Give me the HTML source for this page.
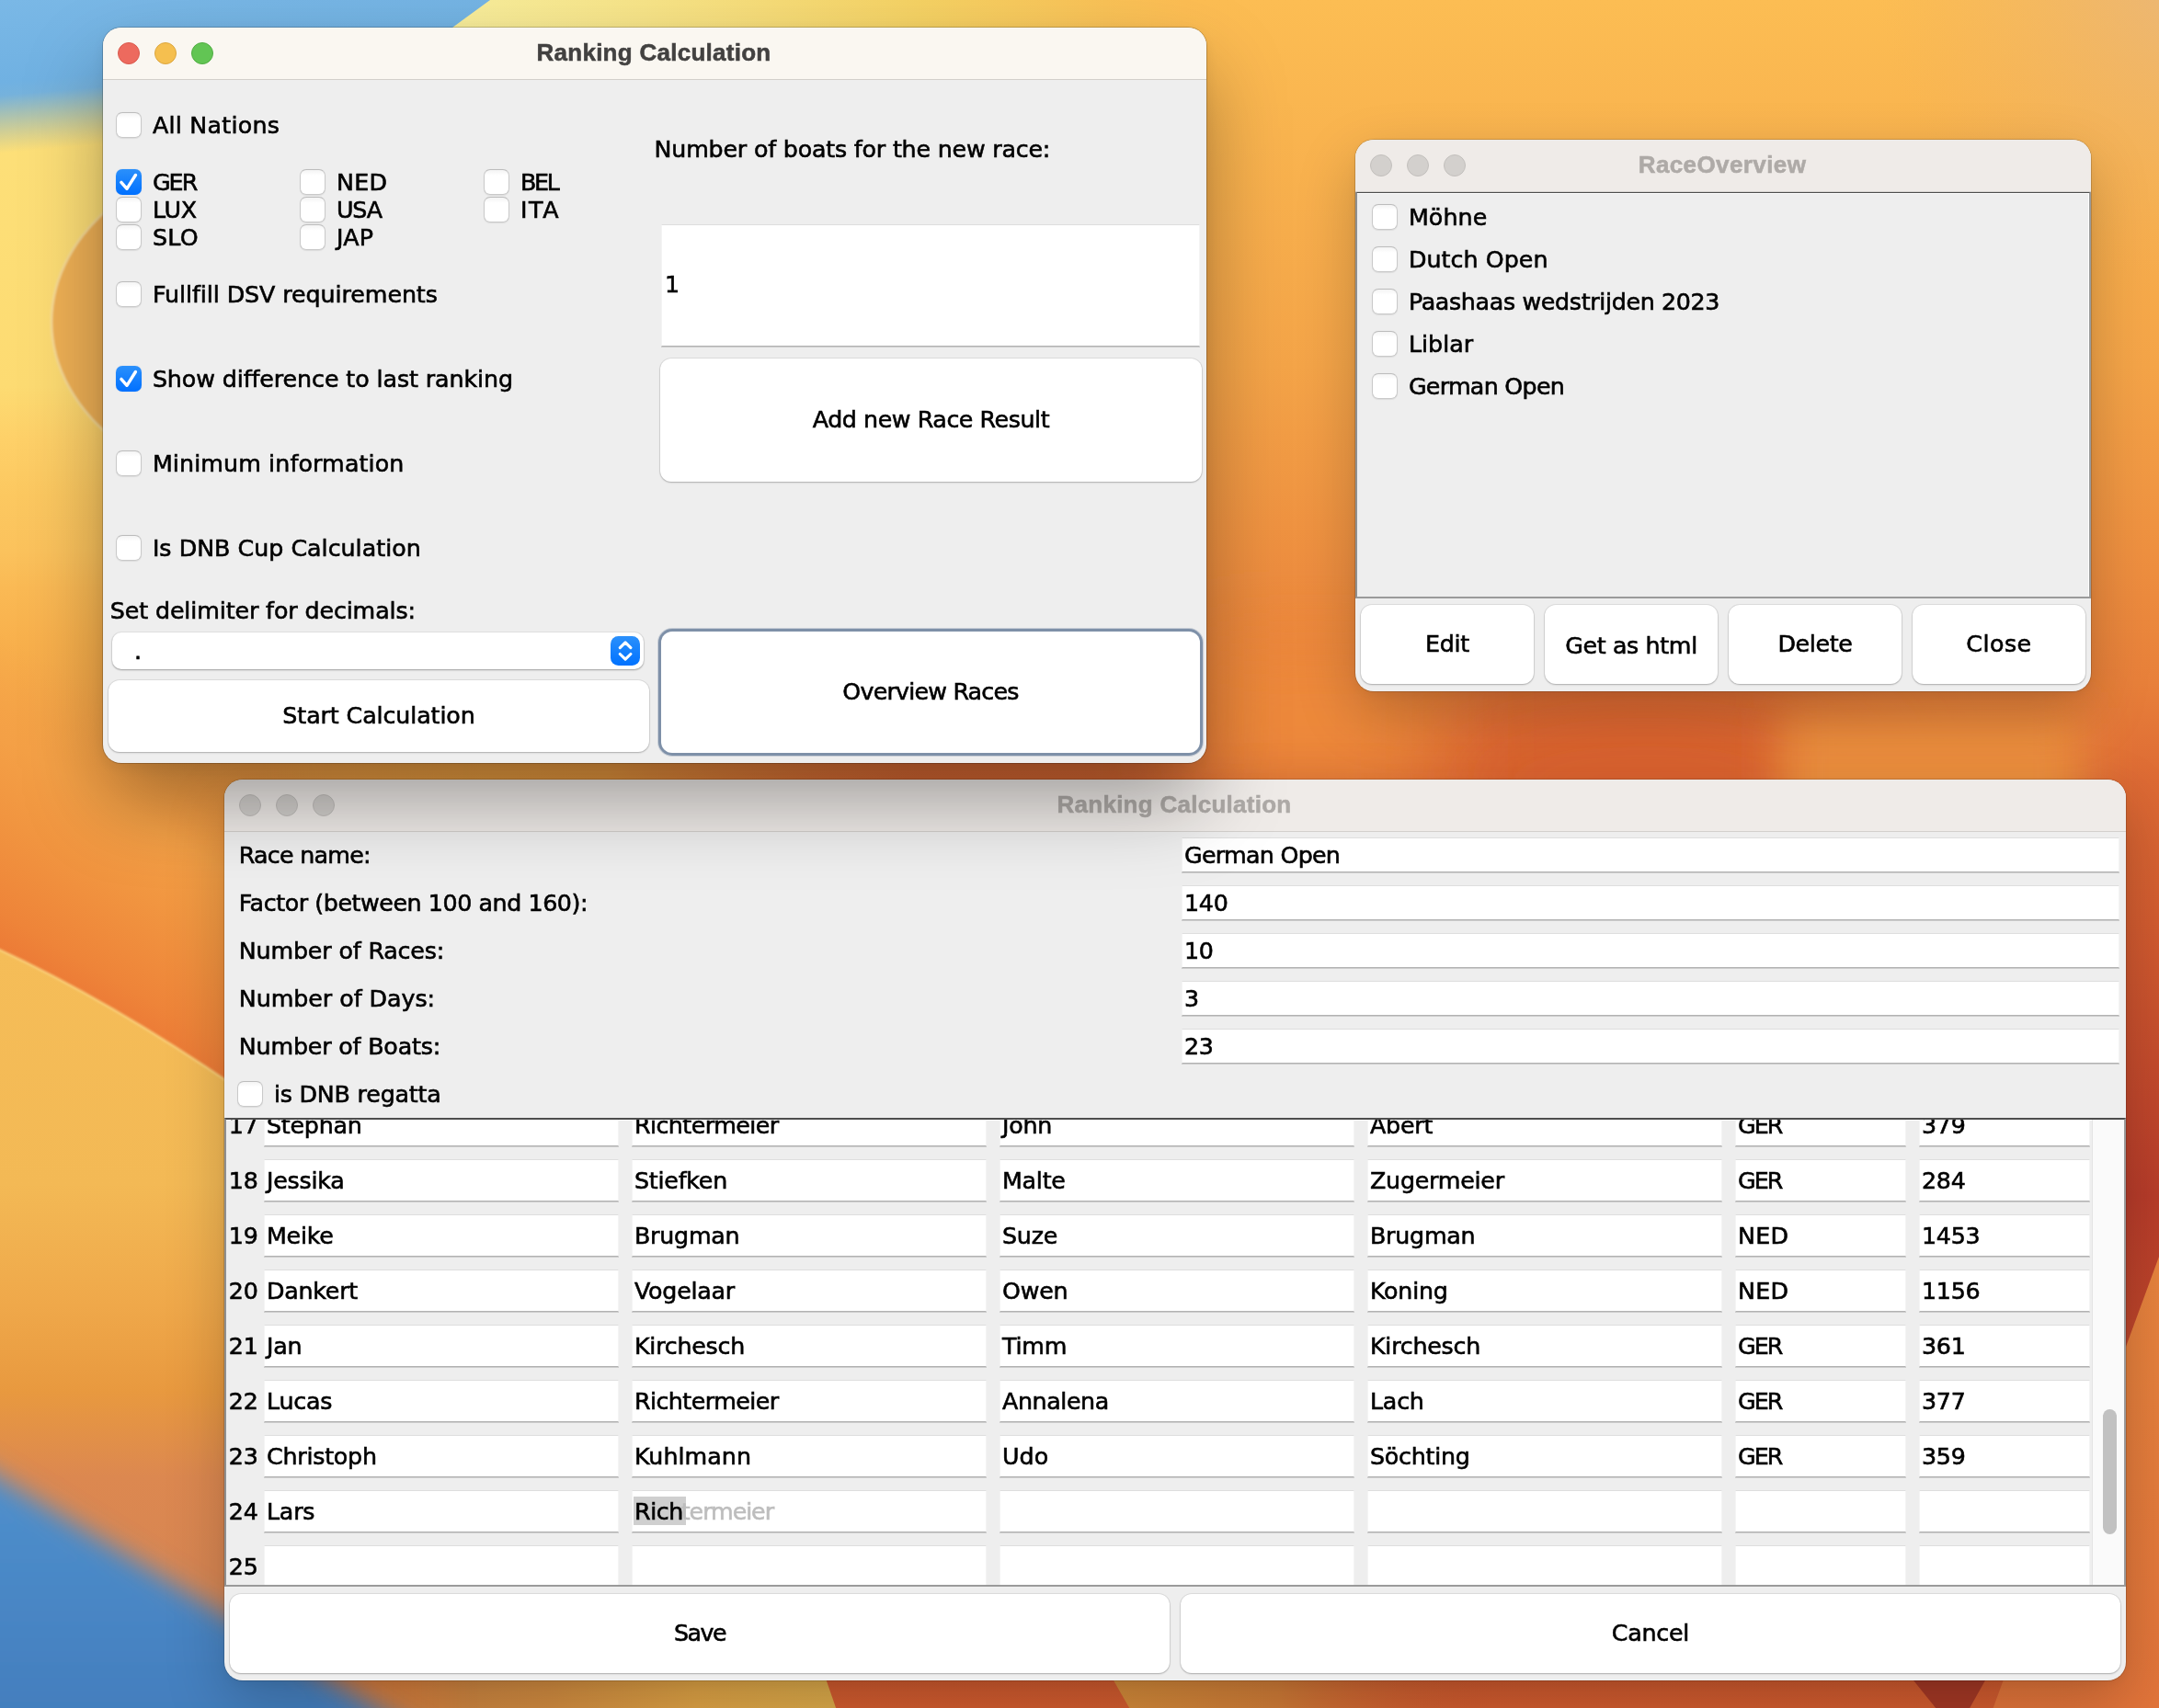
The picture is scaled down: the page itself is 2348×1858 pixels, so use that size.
<!DOCTYPE html>
<html lang="en">
<head>
<meta charset="utf-8">
<title>Ranking Calculation</title>
<style>
html,body{margin:0;padding:0}
body{width:2348px;height:1858px;overflow:hidden;position:relative;background:#ee9440;font-family:"DejaVu Sans","Liberation Sans",sans-serif}
svg.bg{position:absolute;left:0;top:0}
.win{position:absolute;isolation:isolate;will-change:transform;border-radius:20px;background:#eee;overflow:hidden}
.win.active{box-shadow:0 0 0 1px rgba(0,0,0,.20),0 44px 90px -6px rgba(0,0,0,.36),0 4px 18px rgba(0,0,0,.07)}
.win.inactive{box-shadow:0 0 0 1px rgba(0,0,0,.15),0 24px 64px 0 rgba(0,0,0,.21),0 4px 14px rgba(0,0,0,.05)}
.tb{position:absolute;left:0;top:0;right:0;height:56px;background:#faf7f1;box-shadow:0 1px 0 #d2cfca;z-index:2}
.inactive .tb{background:#efebe8;box-shadow:0 1px 0 #d3d0cd}
.tl{position:absolute;top:16px;width:24px;height:24px;border-radius:50%;box-sizing:border-box;background:#d3d0cd;border:1px solid #c2bfbc}
.tl:nth-child(1){left:16px}.tl:nth-child(2){left:56px}.tl:nth-child(3){left:96px}
.tl.r{background:#ed6a5e;border-color:#d95a4e}
.tl.y{background:#f5bf4f;border-color:#dba63e}
.tl.g{background:#62c554;border-color:#50ad43}
.title{position:absolute;left:-1px;right:1px;top:11px;text-align:center;font:bold 26px/32px "Liberation Sans",sans-serif;color:#424140;white-space:nowrap;-webkit-text-stroke:.55px}
.inactive .title{color:#aeaaa7}
.content{position:absolute;left:0;right:0;top:56px;bottom:0}
.t{font-family:"DejaVu Sans","Liberation Sans",sans-serif;font-size:25.3px;line-height:32.5px;letter-spacing:-.23px;color:#000;white-space:nowrap;-webkit-text-stroke:.6px}
.lbl,.rn{position:absolute}
.cb{position:absolute;width:28px;height:28px;box-sizing:border-box;border-radius:7px;background:linear-gradient(#f4f4f4,#fff 22%);border:1px solid #c9c9c9;border-top-color:#bcbcbc;box-shadow:0 .5px 1px rgba(0,0,0,.08)}
.cb.on{border:none;background:linear-gradient(#2b90fb,#0070ff);box-shadow:0 0 1px rgba(0,90,220,.4)}
.cb svg{display:block}
.tf{position:absolute;box-sizing:border-box;background:#fff;border:1px solid #f4f4f4;border-top-color:#dedede;border-bottom:1px solid #b2b2b2;box-shadow:0 1px .5px rgba(0,0,0,.14)}
.tf .t{position:absolute;left:2px}
.hf .t{top:2.7px}
.rf .t{top:6.5px}
.bigtf .t{top:49px;left:3px}
.btn{position:absolute;background:#fff;border-radius:12px;box-shadow:0 0 0 1px rgba(0,0,0,.07),0 1px 2px rgba(0,0,0,.22)}
.btn .t{position:absolute;left:0;right:0;top:50%;margin-top:-16.3px;text-align:center}
.btn.focus{box-shadow:0 0 0 3px #7e90a8,0 0 0 4px rgba(126,144,168,.35)}
.combo{position:absolute;background:#fff;border-radius:10px;box-shadow:0 0 0 1px rgba(0,0,0,.05),0 1px 2px rgba(0,0,0,.30)}
.combo .t{position:absolute;left:24px;top:5px}
.step{position:absolute;right:4px;top:4px;width:32px;height:32px;border-radius:8.5px;background:linear-gradient(#2b90fb,#0072ff)}
.step svg{display:block}
.sp{position:absolute;box-sizing:border-box;border:2px solid #9a9a9a;border-top-color:#4d4d4d;border-left-color:#8f8f8f;overflow:hidden;background:#eee;box-shadow:inset 0 1px 0 rgba(255,255,255,.85),inset -1px 0 0 rgba(255,255,255,.85)}
.sp .cb,.sp .lbl,.sp .rn,.sp .tf{margin:-2px 0 0 -2px}
mark{background:#cfcfcf;color:#000;padding:2px 3px 0 1px;margin:0 -3px 0 -1px}
em{font-style:normal;color:#bdbdbd;letter-spacing:-1.05px;margin-left:-2px}
.sbtrack{position:absolute;right:0;top:0;bottom:0;width:34px;background:#fafafa;border-left:1px solid #e4e4e4}
.sbthumb{position:absolute;right:8px;width:15px;border-radius:8px;background:#c1c1c1;top:315px;height:136px}

</style>
</head>
<body>
<svg class="bg" width="2348" height="1858" viewBox="0 0 2348 1858">
<defs>
<linearGradient id="gv" gradientUnits="userSpaceOnUse" x1="0" y1="0" x2="0" y2="1858">
<stop offset="0" stop-color="#fcbd53"/><stop offset=".215" stop-color="#f4a448"/><stop offset=".323" stop-color="#ee9040"/><stop offset=".40" stop-color="#e8803a"/><stop offset=".457" stop-color="#dd6a34"/><stop offset=".54" stop-color="#d35c30"/><stop offset=".70" stop-color="#b83c2a"/><stop offset=".80" stop-color="#c0482b"/><stop offset="1" stop-color="#d25c2f"/>
</linearGradient>
<linearGradient id="gl" gradientUnits="userSpaceOnUse" x1="0" y1="0" x2="0" y2="1858">
<stop offset="0" stop-color="#fde27c"/><stop offset=".226" stop-color="#fddb72"/><stop offset=".258" stop-color="#fed068"/><stop offset=".29" stop-color="#fcc860"/><stop offset=".323" stop-color="#fbc25c"/><stop offset=".345" stop-color="#fab954"/><stop offset=".377" stop-color="#f8b04c"/><stop offset=".43" stop-color="#f5a346"/><stop offset=".484" stop-color="#f19540"/><stop offset=".538" stop-color="#ee8439"/><stop offset=".65" stop-color="#ec7a36"/>
</linearGradient>
<linearGradient id="glm" gradientUnits="userSpaceOnUse" x1="0" y1="0" x2="520" y2="0">
<stop offset="0" stop-color="#fff"/><stop offset=".55" stop-color="#fff"/><stop offset="1" stop-color="#000"/>
</linearGradient>
<mask id="ml"><rect x="0" y="0" width="520" height="1858" fill="url(#glm)"/></mask>
<linearGradient id="gp" gradientUnits="userSpaceOnUse" x1="0" y1="1035" x2="0" y2="1700">
<stop offset="0" stop-color="#f5bd58"/><stop offset=".38" stop-color="#f3b955"/><stop offset=".58" stop-color="#efa84a"/><stop offset=".72" stop-color="#e8993f"/><stop offset=".86" stop-color="#dc8850"/><stop offset="1" stop-color="#d88652"/>
</linearGradient>
<linearGradient id="gtop" gradientUnits="userSpaceOnUse" x1="480" y1="0" x2="1330" y2="0">
<stop offset="0" stop-color="#f8ee9c"/><stop offset=".26" stop-color="#f7e488"/><stop offset=".61" stop-color="#f5d264"/><stop offset=".85" stop-color="#f9c257"/><stop offset=".95" stop-color="#fcbd53"/><stop offset="1" stop-color="#fcbd53" stop-opacity="0"/>
</linearGradient>
<linearGradient id="gblue" gradientUnits="userSpaceOnUse" x1="0" y1="0" x2="16" y2="178">
<stop offset="0" stop-color="#7ab8e6"/><stop offset=".5" stop-color="#70b1e2"/><stop offset=".58" stop-color="#70b0e0" stop-opacity=".96"/><stop offset=".93" stop-color="#86aebc" stop-opacity="0"/>
</linearGradient>
<linearGradient id="gblue2" gradientUnits="userSpaceOnUse" x1="0" y1="1600" x2="0" y2="1858">
<stop offset="0" stop-color="#4f90cd"/><stop offset="1" stop-color="#437ebe"/>
</linearGradient>
<radialGradient id="gtr" gradientUnits="userSpaceOnUse" cx="2400" cy="-40" r="360">
<stop offset="0" stop-color="#e6b682" stop-opacity=".9"/><stop offset="1" stop-color="#eeb060" stop-opacity="0"/>
</radialGradient>
<linearGradient id="grp" gradientUnits="userSpaceOnUse" x1="0" y1="1367" x2="0" y2="1858">
<stop offset="0" stop-color="#e8843e"/><stop offset="1" stop-color="#e2743a"/>
</linearGradient>
<filter id="b14" x="-20%" y="-20%" width="140%" height="140%"><feGaussianBlur stdDeviation="14"/></filter>
<filter id="b25" x="-30%" y="-30%" width="160%" height="160%"><feGaussianBlur stdDeviation="25"/></filter>
<filter id="b50" x="-50%" y="-50%" width="200%" height="200%"><feGaussianBlur stdDeviation="50"/></filter>
<filter id="b2" x="-5%" y="-5%" width="110%" height="110%"><feGaussianBlur stdDeviation="1.2"/></filter>
</defs>
<rect width="2348" height="1858" fill="url(#gv)"/>
<!-- right side tints -->
<rect x="1800" y="0" width="548" height="420" fill="url(#gtr)"/>
<ellipse cx="1790" cy="850" rx="260" ry="110" fill="#da622f" filter="url(#b50)"/>
<rect x="1935" y="770" width="330" height="140" fill="#ec8e3d" filter="url(#b25)"/>
<rect x="1300" y="700" width="260" height="160" fill="#ee8a3b" filter="url(#b50)"/>
<polygon points="2348,1367 2420,1171 2420,1900 2150,1900 2168,1857" fill="url(#grp)"/>
<!-- bottom strip pieces -->
<linearGradient id="gbot" gradientUnits="userSpaceOnUse" x1="330" y1="0" x2="900" y2="0"><stop offset="0" stop-color="#c47a42"/><stop offset=".47" stop-color="#d28c40"/><stop offset=".75" stop-color="#dfa345"/><stop offset="1" stop-color="#dcaa4a"/></linearGradient>
<polygon points="300,1800 889,1800 915,1875 300,1875" fill="url(#gbot)"/>
<linearGradient id="gbot2" gradientUnits="userSpaceOnUse" x1="1200" y1="0" x2="1620" y2="0"><stop offset="0" stop-color="#d48c3a"/><stop offset=".45" stop-color="#d07c37"/><stop offset="1" stop-color="#cb5a2e" stop-opacity="0"/></linearGradient>
<polygon points="1195,1800 1620,1800 1620,1875 1238,1875" fill="url(#gbot2)"/>
<polygon points="2081,1828 2159,1828 2127,1885" fill="#a53825"/>
<linearGradient id="gmid" gradientUnits="userSpaceOnUse" x1="244" y1="0" x2="1000" y2="0"><stop offset="0" stop-color="#f3ac47"/><stop offset=".55" stop-color="#ef9c40"/><stop offset="1" stop-color="#e8803a" stop-opacity="0"/></linearGradient>
<rect x="244" y="822" width="760" height="34" fill="url(#gmid)"/>
<!-- left column -->
<g mask="url(#ml)"><rect x="0" y="0" width="520" height="1858" fill="url(#gl)"/></g>
<linearGradient id="gdiag" gradientUnits="userSpaceOnUse" x1="122" y1="1106" x2="273" y2="847"><stop offset="0" stop-color="#ec7a36"/><stop offset=".12" stop-color="#ee8439"/><stop offset=".43" stop-color="#f19540"/><stop offset=".67" stop-color="#f4a046"/><stop offset="1" stop-color="#f5a548" stop-opacity="0"/></linearGradient>
<rect x="-10" y="640" width="330" height="620" fill="url(#gdiag)"/>
<!-- top strip -->
<rect x="0" y="0" width="1330" height="40" fill="url(#gtop)"/>
<!-- blue top-left -->
<polygon points="0,0 533,0 492,30 300,175 0,175" fill="url(#gblue)"/>
<!-- orange petal on left -->
<ellipse cx="322" cy="350" rx="266" ry="192" fill="#efb055" stroke="#f8dc98" stroke-width="2.5" filter="url(#b2)"/>
<!-- yellow petal lower-left -->
<path d="M-10,1029 Q120,1088 270,1192 L270,1870 L-10,1870 Z" fill="url(#gp)"/>
<path d="M-10,1029 Q120,1088 270,1192" fill="none" stroke="#f9cd78" stroke-width="2.5" filter="url(#b2)"/>
<!-- blue bottom-left -->
<polygon points="-100,1547 540,1937 -100,1937" fill="url(#gblue2)" filter="url(#b14)"/>
</svg>
<div class="win inactive" id="w3" style="left:244px;top:848px;width:2068px;height:980px"><div class="tb"><i class="tl"></i><i class="tl"></i><i class="tl"></i><span class="title" style="letter-spacing:.27px">Ranking Calculation</span></div><div class="content"><span class="t lbl" style="left:15.800000000000011px;top:10.7px;letter-spacing:-0.73px">Race name:</span><div class="tf hf" style="left:1041px;top:7px;width:1020px;height:38px"><span class="t" style="letter-spacing:-0.7px">German Open</span></div><span class="t lbl" style="left:15.800000000000011px;top:62.7px;letter-spacing:-0.42px">Factor (between 100 and 160):</span><div class="tf hf" style="left:1041px;top:59px;width:1020px;height:38px"><span class="t">140</span></div><span class="t lbl" style="left:15.800000000000011px;top:114.7px;letter-spacing:-0.15px">Number of Races:</span><div class="tf hf" style="left:1041px;top:111px;width:1020px;height:38px"><span class="t">10</span></div><span class="t lbl" style="left:15.800000000000011px;top:166.7px;letter-spacing:-0.03px">Number of Days:</span><div class="tf hf" style="left:1041px;top:163px;width:1020px;height:38px"><span class="t">3</span></div><span class="t lbl" style="left:15.800000000000011px;top:218.7px;letter-spacing:-0.17px">Number of Boats:</span><div class="tf hf" style="left:1041px;top:215px;width:1020px;height:38px"><span class="t">23</span></div><span class="cb" style="left:14px;top:272px"></span><span class="t lbl" style="left:53.9px;top:270.8px;letter-spacing:-0.19px">is DNB regatta</span><div class="sp" style="left:0;top:312px;width:2068px;height:510px"><span class="t rn" style="left:4.800000000000011px;top:-7.4px">17</span><div class="tf rf" style="left:43px;top:-15px;width:386px;height:46px"><span class="t">Stephan</span></div><div class="tf rf" style="left:443px;top:-15px;width:386px;height:46px"><span class="t" style="letter-spacing:-0.55px">Richtermeier</span></div><div class="tf rf" style="left:843px;top:-15px;width:386px;height:46px"><span class="t">John</span></div><div class="tf rf" style="left:1243px;top:-15px;width:386px;height:46px"><span class="t">Abert</span></div><div class="tf rf" style="left:1643px;top:-15px;width:186px;height:46px"><span class="t" style="letter-spacing:-1.9px">GER</span></div><div class="tf rf" style="left:1843px;top:-15px;width:186px;height:46px"><span class="t">379</span></div><span class="t rn" style="left:4.800000000000011px;top:52.6px">18</span><div class="tf rf" style="left:43px;top:45px;width:386px;height:46px"><span class="t">Jessika</span></div><div class="tf rf" style="left:443px;top:45px;width:386px;height:46px"><span class="t">Stiefken</span></div><div class="tf rf" style="left:843px;top:45px;width:386px;height:46px"><span class="t">Malte</span></div><div class="tf rf" style="left:1243px;top:45px;width:386px;height:46px"><span class="t">Zugermeier</span></div><div class="tf rf" style="left:1643px;top:45px;width:186px;height:46px"><span class="t" style="letter-spacing:-1.9px">GER</span></div><div class="tf rf" style="left:1843px;top:45px;width:186px;height:46px"><span class="t">284</span></div><span class="t rn" style="left:4.800000000000011px;top:112.6px">19</span><div class="tf rf" style="left:43px;top:105px;width:386px;height:46px"><span class="t">Meike</span></div><div class="tf rf" style="left:443px;top:105px;width:386px;height:46px"><span class="t">Brugman</span></div><div class="tf rf" style="left:843px;top:105px;width:386px;height:46px"><span class="t">Suze</span></div><div class="tf rf" style="left:1243px;top:105px;width:386px;height:46px"><span class="t">Brugman</span></div><div class="tf rf" style="left:1643px;top:105px;width:186px;height:46px"><span class="t" style="letter-spacing:0.35px">NED</span></div><div class="tf rf" style="left:1843px;top:105px;width:186px;height:46px"><span class="t">1453</span></div><span class="t rn" style="left:4.800000000000011px;top:172.6px">20</span><div class="tf rf" style="left:43px;top:165px;width:386px;height:46px"><span class="t">Dankert</span></div><div class="tf rf" style="left:443px;top:165px;width:386px;height:46px"><span class="t">Vogelaar</span></div><div class="tf rf" style="left:843px;top:165px;width:386px;height:46px"><span class="t">Owen</span></div><div class="tf rf" style="left:1243px;top:165px;width:386px;height:46px"><span class="t">Koning</span></div><div class="tf rf" style="left:1643px;top:165px;width:186px;height:46px"><span class="t" style="letter-spacing:0.35px">NED</span></div><div class="tf rf" style="left:1843px;top:165px;width:186px;height:46px"><span class="t">1156</span></div><span class="t rn" style="left:4.800000000000011px;top:232.6px">21</span><div class="tf rf" style="left:43px;top:225px;width:386px;height:46px"><span class="t">Jan</span></div><div class="tf rf" style="left:443px;top:225px;width:386px;height:46px"><span class="t">Kirchesch</span></div><div class="tf rf" style="left:843px;top:225px;width:386px;height:46px"><span class="t">Timm</span></div><div class="tf rf" style="left:1243px;top:225px;width:386px;height:46px"><span class="t">Kirchesch</span></div><div class="tf rf" style="left:1643px;top:225px;width:186px;height:46px"><span class="t" style="letter-spacing:-1.9px">GER</span></div><div class="tf rf" style="left:1843px;top:225px;width:186px;height:46px"><span class="t">361</span></div><span class="t rn" style="left:4.800000000000011px;top:292.6px">22</span><div class="tf rf" style="left:43px;top:285px;width:386px;height:46px"><span class="t">Lucas</span></div><div class="tf rf" style="left:443px;top:285px;width:386px;height:46px"><span class="t" style="letter-spacing:-0.55px">Richtermeier</span></div><div class="tf rf" style="left:843px;top:285px;width:386px;height:46px"><span class="t" style="letter-spacing:-0.39px">Annalena</span></div><div class="tf rf" style="left:1243px;top:285px;width:386px;height:46px"><span class="t">Lach</span></div><div class="tf rf" style="left:1643px;top:285px;width:186px;height:46px"><span class="t" style="letter-spacing:-1.9px">GER</span></div><div class="tf rf" style="left:1843px;top:285px;width:186px;height:46px"><span class="t">377</span></div><span class="t rn" style="left:4.800000000000011px;top:352.6px">23</span><div class="tf rf" style="left:43px;top:345px;width:386px;height:46px"><span class="t">Christoph</span></div><div class="tf rf" style="left:443px;top:345px;width:386px;height:46px"><span class="t" style="letter-spacing:0.04px">Kuhlmann</span></div><div class="tf rf" style="left:843px;top:345px;width:386px;height:46px"><span class="t" style="letter-spacing:0.1px">Udo</span></div><div class="tf rf" style="left:1243px;top:345px;width:386px;height:46px"><span class="t">Söchting</span></div><div class="tf rf" style="left:1643px;top:345px;width:186px;height:46px"><span class="t" style="letter-spacing:-1.9px">GER</span></div><div class="tf rf" style="left:1843px;top:345px;width:186px;height:46px"><span class="t">359</span></div><span class="t rn" style="left:4.800000000000011px;top:412.6px">24</span><div class="tf rf" style="left:43px;top:405px;width:386px;height:46px"><span class="t">Lars</span></div><div class="tf rf" style="left:443px;top:405px;width:386px;height:46px"><span class="t" style="letter-spacing:-.45px"><mark>Rich</mark><em>termeier</em></span></div><div class="tf rf" style="left:843px;top:405px;width:386px;height:46px"></div><div class="tf rf" style="left:1243px;top:405px;width:386px;height:46px"></div><div class="tf rf" style="left:1643px;top:405px;width:186px;height:46px"></div><div class="tf rf" style="left:1843px;top:405px;width:186px;height:46px"></div><span class="t rn" style="left:4.800000000000011px;top:472.6px">25</span><div class="tf rf" style="left:43px;top:465px;width:386px;height:46px"></div><div class="tf rf" style="left:443px;top:465px;width:386px;height:46px"></div><div class="tf rf" style="left:843px;top:465px;width:386px;height:46px"></div><div class="tf rf" style="left:1243px;top:465px;width:386px;height:46px"></div><div class="tf rf" style="left:1643px;top:465px;width:186px;height:46px"></div><div class="tf rf" style="left:1843px;top:465px;width:186px;height:46px"></div><div class="sbtrack"></div><div class="sbthumb"></div></div><div class="btn" style="left:6px;top:830px;width:1022px;height:86px"><span class="t" style="letter-spacing:-1.47px">Save</span></div><div class="btn" style="left:1040px;top:830px;width:1022px;height:86px"><span class="t" style="letter-spacing:-0.22px">Cancel</span></div></div></div>
<div class="win inactive" id="w2" style="left:1474px;top:152px;width:800px;height:600px"><div class="tb"><i class="tl"></i><i class="tl"></i><i class="tl"></i><span class="title" style="letter-spacing:.4px">RaceOverview</span></div><div class="content"><div class="sp" style="left:0;top:0;width:800px;height:443px"><span class="cb" style="left:18px;top:14px"></span><span class="t lbl" style="left:57.9px;top:12.8px;letter-spacing:0.13px">Möhne</span><span class="cb" style="left:18px;top:60px"></span><span class="t lbl" style="left:57.9px;top:58.8px;letter-spacing:0.07px">Dutch Open</span><span class="cb" style="left:18px;top:106px"></span><span class="t lbl" style="left:57.9px;top:104.8px;letter-spacing:-0.33px">Paashaas wedstrijden 2023</span><span class="cb" style="left:18px;top:152px"></span><span class="t lbl" style="left:57.9px;top:150.8px;letter-spacing:0.02px">Liblar</span><span class="cb" style="left:18px;top:198px"></span><span class="t lbl" style="left:57.9px;top:196.8px;letter-spacing:-0.7px">German Open</span></div><div class="btn" style="left:6px;top:450px;width:188px;height:86px"><span class="t" style="letter-spacing:-0.23px">Edit</span></div><div class="btn" style="left:206px;top:450px;width:188px;height:86px"><span class="t" style="letter-spacing:-0.35px;margin-top:-14.3px">Get as html</span></div><div class="btn" style="left:406px;top:450px;width:188px;height:86px"><span class="t" style="letter-spacing:-0.34px">Delete</span></div><div class="btn" style="left:606px;top:450px;width:188px;height:86px"><span class="t" style="letter-spacing:0.47px">Close</span></div></div></div>
<div class="win active" id="w1" style="left:112px;top:30px;width:1200px;height:800px"><div class="tb"><i class="tl r"></i><i class="tl y"></i><i class="tl g"></i><span class="title" style="letter-spacing:.27px">Ranking Calculation</span></div><div class="content"><span class="cb" style="left:14px;top:36px"></span><span class="t lbl" style="left:53.9px;top:34.8px;letter-spacing:0.26px">All Nations</span><span class="cb on" style="left:14px;top:98px"><svg width="28" height="28" viewBox="0 0 28 28"><path d="M5.9 14.4 L12 21.3 L21.4 6.5" fill="none" stroke="#fff" stroke-width="3.4" stroke-linecap="round" stroke-linejoin="round"/></svg></span><span class="t lbl" style="left:53.9px;top:96.8px;letter-spacing:-1.9px">GER</span><span class="cb" style="left:214px;top:98px"></span><span class="t lbl" style="left:253.9px;top:96.8px;letter-spacing:0.35px">NED</span><span class="cb" style="left:414px;top:98px"></span><span class="t lbl" style="left:453.9px;top:96.8px;letter-spacing:-2.2px">BEL</span><span class="cb" style="left:14px;top:128px"></span><span class="t lbl" style="left:53.9px;top:126.8px;letter-spacing:-0.25px">LUX</span><span class="cb" style="left:214px;top:128px"></span><span class="t lbl" style="left:253.9px;top:126.8px;letter-spacing:-1.1px">USA</span><span class="cb" style="left:414px;top:128px"></span><span class="t lbl" style="left:453.9px;top:126.8px;letter-spacing:1.7px">ITA</span><span class="cb" style="left:14px;top:158px"></span><span class="t lbl" style="left:53.9px;top:156.8px;letter-spacing:0.35px">SLO</span><span class="cb" style="left:214px;top:158px"></span><span class="t lbl" style="left:253.9px;top:156.8px;letter-spacing:0.25px">JAP</span><span class="cb" style="left:14px;top:220px"></span><span class="t lbl" style="left:53.9px;top:218.8px;letter-spacing:-0.06px">Fullfill DSV requirements</span><span class="cb on" style="left:14px;top:312px"><svg width="28" height="28" viewBox="0 0 28 28"><path d="M5.9 14.4 L12 21.3 L21.4 6.5" fill="none" stroke="#fff" stroke-width="3.4" stroke-linecap="round" stroke-linejoin="round"/></svg></span><span class="t lbl" style="left:53.9px;top:310.8px;letter-spacing:-0.08px">Show difference to last ranking</span><span class="cb" style="left:14px;top:404px"></span><span class="t lbl" style="left:53.9px;top:402.8px;letter-spacing:0.12px">Minimum information</span><span class="cb" style="left:14px;top:496px"></span><span class="t lbl" style="left:53.9px;top:494.8px;letter-spacing:0.02px">Is DNB Cup Calculation</span><span class="t lbl" style="left:7.799999999999997px;top:563.2px;letter-spacing:-0.11px">Set delimiter for decimals:</span><div class="combo" style="left:10px;top:602px;width:578px;height:40px"><span class="t">.</span><span class="step"><svg width="32" height="32" viewBox="0 0 32 32"><path d="M10.3 12.6 L16.1 6.9 L21.9 12.6 M10.3 19.5 L16.1 25.2 L21.9 19.5" fill="none" stroke="#fff" stroke-width="3.1" stroke-linecap="round" stroke-linejoin="round"/></svg></span></div><div class="btn" style="left:6px;top:654px;width:588px;height:78px"><span class="t" style="letter-spacing:-0.1px">Start Calculation</span></div><span class="t lbl" style="left:599.6px;top:61px;letter-spacing:-0.19px">Number of boats for the new race:</span><div class="tf bigtf" style="left:607px;top:158px;width:586px;height:133px"><span class="t">1</span></div><div class="btn" style="left:606px;top:304px;width:589px;height:134px"><span class="t" style="letter-spacing:-0.43px">Add new Race Result</span></div><div class="btn focus" style="left:607px;top:601px;width:586px;height:132px"><span class="t" style="letter-spacing:-0.79px">Overview Races</span></div></div></div>
</body>
</html>
